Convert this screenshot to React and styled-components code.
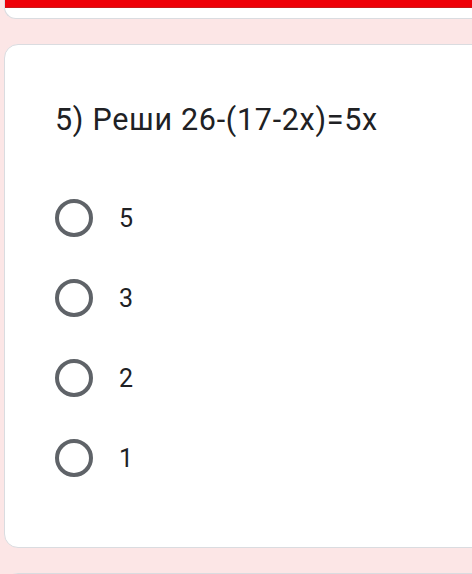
import React from 'react';
import styled, { createGlobalStyle } from 'styled-components';

const Global = createGlobalStyle`
    html, body {
        margin: 0;
        padding: 0;
        background: #fce6e6;
        overflow: hidden;
    }
    body {
        font-family: Roboto, 'Noto Sans', sans-serif;
        color: #202124;
    }
`;

const Page = styled.div`
    width: 472px;
    height: 574px;
    display: flex;
    flex-direction: column;
    overflow: hidden;
`;

const TopCard = styled.div`
    margin: 0 -20px 0 4px;
    height: 18px;
    background: #fff;
    border-bottom: 1px solid #dadce0;
    border-left: 1px solid #dadce0;
    border-bottom-left-radius: 12px;
    display: flex;
    flex-direction: column;
    overflow: hidden;
    flex-shrink: 0;
`;

const RedStrip = styled.div`
    height: 7px;
    margin-left: -10px;
    background: #ee0008;
    border-bottom: 1px solid #c81a1a;
`;

const Card = styled.div`
    margin: ${p => p.$top}px -20px 0 4px;
    height: ${p => p.$h}px;
    background: #fff;
    border: 1px solid #dadce0;
    border-radius: 14px;
    box-sizing: border-box;
    padding: 56px 0 0 50px;
    flex-shrink: 0;
`;

const Title = styled.div`
    font-size: 30.5px;
    line-height: 38px;
    letter-spacing: 0.7px;
    color: #202124;
    margin-bottom: 60px;
`;

const Options = styled.div`
    display: flex;
    flex-direction: column;
    gap: 42px;
`;

const Option = styled.label`
    display: flex;
    align-items: center;
    gap: 26px;
    height: 38px;
`;

const Radio = styled.span`
    width: 38px;
    height: 38px;
    box-sizing: border-box;
    border: 4px solid #5f6368;
    border-radius: 50%;
    flex-shrink: 0;
`;

const OptionText = styled.span`
    font-size: 25px;
    color: #202124;
`;

const answers = ['5', '3', '2', '1'];

const App = () => {
    return (
        <Page>
            <Global />
            <TopCard>
                <RedStrip />
            </TopCard>
            <Card $top={25} $h={504}>
                <Title>5) Реши 26-(17-2x)=5x</Title>
                <Options>
                    {answers.map(a => (
                        <Option key={a}>
                            <Radio />
                            <OptionText>{a}</OptionText>
                        </Option>
                    ))}
                </Options>
            </Card>
            <Card $top={25} $h={40} />
        </Page>
    );
}

export default App;
